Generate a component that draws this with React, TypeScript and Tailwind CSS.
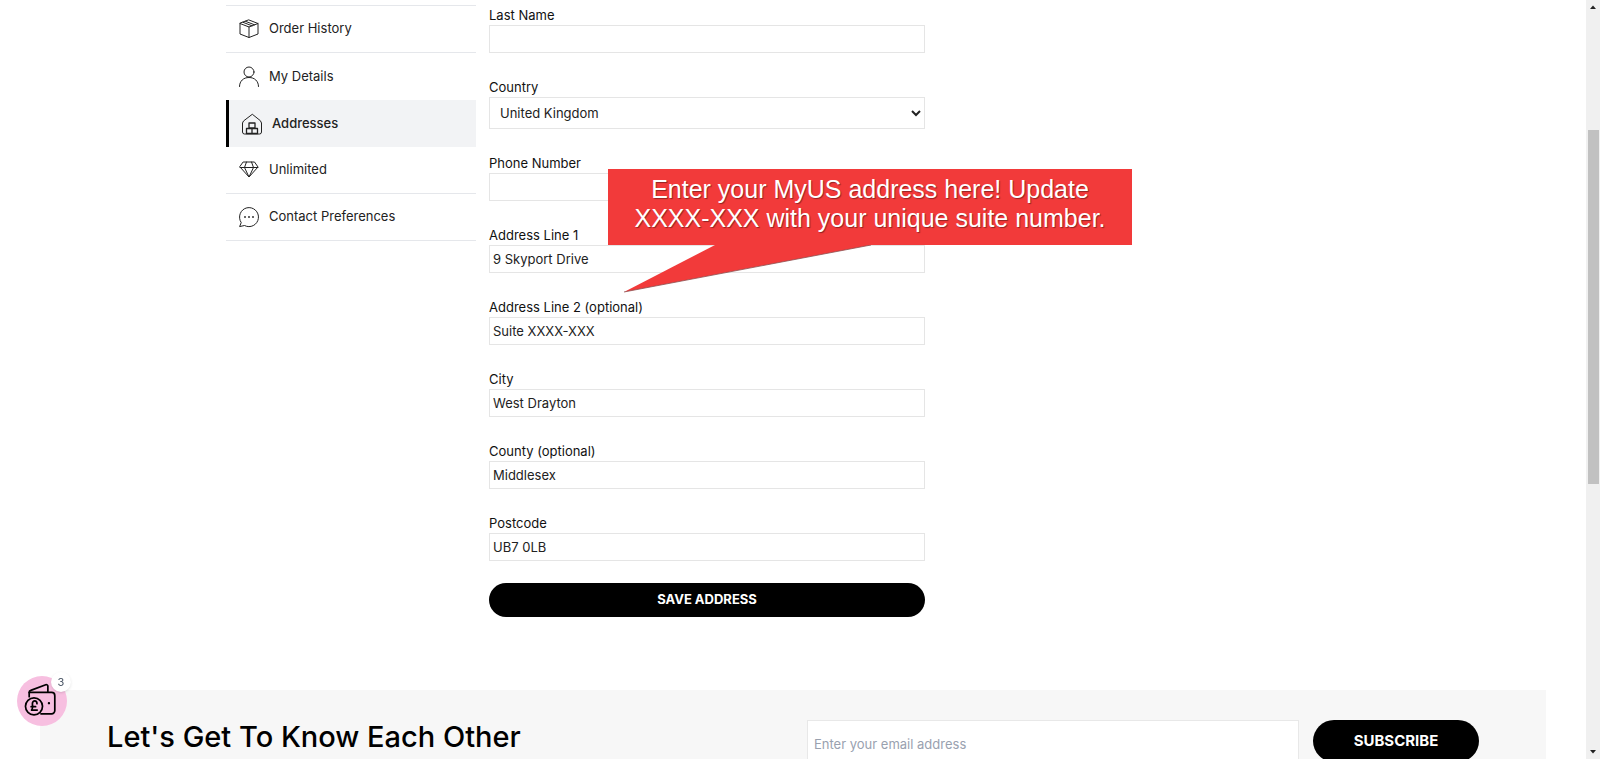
import { FC, ReactNode, useState } from "react";

interface NavItem {
  label: string;
  icon: ReactNode;
  active?: boolean;
  divider?: boolean;
}

interface FieldProps {
  id: string;
  label: string;
  defaultValue?: string;
}

const iconProps = {
  viewBox: "0 0 24 24",
  fill: "none",
  stroke: "currentColor",
  strokeLinejoin: "round" as const,
  strokeLinecap: "round" as const,
  className: "size-6 shrink-0",
  "aria-hidden": true,
};

const BoxIcon = () => (
  <svg {...iconProps}>
    <path d="M12 3 21 6.500v10.500L12 20.500l-9-3.500V6.500z" />
    <path d="M3 6.500 12 10l9-3.500M12 10v10.500M6 5.300l9 3.500M8.500 4.300l9 3.500" />
  </svg>
);

const PersonIcon = () => (
  <svg {...iconProps}>
    <circle cx="12" cy="7" r="5" />
    <path d="M2.500 21.500c0-5.500 4-9 9.500-9s9.500 3.500 9.500 9" />
  </svg>
);

const HouseIcon = () => (
  <svg {...iconProps}>
    <path d="M12 2.500 3.500 9 2.500 11v9a2 2 0 0 0 2 2h15a2 2 0 0 0 2-2v-9l-1-2z" />
    <path
      d="M9 11h6v5H9zM6.500 16.500h11V21.500h-11zM12 16.500v5"
      strokeWidth="1.3"
    />
  </svg>
);

const DiamondIcon = () => (
  <svg {...iconProps}>
    <path d="M6.500 4h11L21 9l-9 10L3 9z" />
    <path d="M3 9.500h18M9.500 4l-2 5.500L12 19l4.500-9.500-2-5.500" />
  </svg>
);

const ChatIcon = () => (
  <svg {...iconProps}>
    <path d="M4 17.300a9.500 9.500 0 1 1 3.500 3.200L3 21.500z" />
    <path d="M8 12h.01M12 12h.01M16 12h.01" strokeWidth="1.8" />
  </svg>
);

const navItems: NavItem[] = [
  { label: "Order History", icon: <BoxIcon />, divider: true },
  { label: "My Details", icon: <PersonIcon /> },
  { label: "Addresses", icon: <HouseIcon />, active: true },
  { label: "Unlimited", icon: <DiamondIcon />, divider: true },
  { label: "Contact Preferences", icon: <ChatIcon />, divider: true },
];

const Field: FC<FieldProps> = ({ id, label, defaultValue }) => (
  <div className="flex flex-col">
    <label htmlFor={id} className="leading-5">
      {label}
    </label>
    <input
      id={id}
      type="text"
      defaultValue={defaultValue}
      className="h-7 w-full border border-[#e5e5e5] bg-white px-[3px] text-[#222]"
    />
  </div>
);

const Sidebar = () => (
  <nav className="w-[250px] shrink-0 self-start border-t border-gray-200">
    {navItems.map((item) => (
      <a
        key={item.label}
        href="#"
        className={`flex h-[47px] items-center gap-2 pl-[11px] text-[#222] ${
          item.active ? "border-l-3 border-black bg-[#f2f3f5] font-medium" : ""
        } ${item.divider ? "border-b border-gray-200" : ""}`}
      >
        {item.icon}
        {item.label}
      </a>
    ))}
  </nav>
);

const Callout = () => (
  <div className="absolute top-[164px] left-[119px] w-[524px] font-['Liberation_Sans',Arial,sans-serif] text-white">
    <p className="h-[76px] bg-[#f23a3a] pt-1.5 text-center text-[25px] leading-[29px] [text-shadow:1px_1px_1px_rgba(0,0,0,0.4)]">
      Enter your MyUS address here! Update
      <br />
      XXXX-XXX with your unique suite number.
    </p>
    <svg viewBox="0 0 524 48" className="block w-full" aria-hidden="true">
      <path d="M107 0H263L16 47z" fill="#f23a3a" />
      <path d="M263 0 16 47" stroke="#8c5050" strokeWidth="0.8" />
    </svg>
  </div>
);

const AddressForm = () => (
  <form
    className="relative w-[436px] shrink-0"
    onSubmit={(e) => e.preventDefault()}
  >
    <div className="flex flex-col gap-6">
      <Field id="last-name" label="Last Name" />
      <div className="flex flex-col">
        <label htmlFor="country" className="leading-5">
          Country
        </label>
        <select
          id="country"
          className="h-8 w-full border border-[#e5e5e5] bg-white px-1.5 text-[#222]"
        >
          <option>United Kingdom</option>
        </select>
      </div>
      <Field id="phone" label="Phone Number" />
      <Field id="line1" label="Address Line 1" defaultValue="9 Skyport Drive" />
      <Field
        id="line2"
        label="Address Line 2 (optional)"
        defaultValue="Suite XXXX-XXX"
      />
      <Field id="city" label="City" defaultValue="West Drayton" />
      <Field id="county" label="County (optional)" defaultValue="Middlesex" />
      <Field id="postcode" label="Postcode" defaultValue="UB7 0LB" />
    </div>
    <button
      type="submit"
      className="mt-[22px] h-[34px] w-full rounded-full bg-black font-bold text-white"
    >
      SAVE ADDRESS
    </button>
    <Callout />
  </form>
);

const Newsletter = () => (
  <section className="mx-10 mt-[73px] grid grid-cols-2 gap-7 bg-[#f7f7f7] px-[67px] py-[30px]">
    <h2 className="text-[29px] leading-[34px] font-medium text-black">
      Let's Get To Know Each Other
    </h2>
    <form
      className="flex items-start gap-3.5"
      onSubmit={(e) => e.preventDefault()}
    >
      <input
        type="email"
        aria-label="Email address"
        placeholder="Enter your email address"
        className="h-12 min-w-0 flex-1 border border-[#e8e8e8] bg-white px-1.5 placeholder:text-gray-400"
      />
      <button
        type="submit"
        className="h-[42px] w-[166px] rounded-full bg-black text-[15px] font-bold text-white"
      >
        SUBSCRIBE
      </button>
    </form>
  </section>
);

const RewardsButton = () => {
  const [count] = useState(3);
  return (
    <button
      type="button"
      aria-label="Rewards"
      className="fixed bottom-[33px] left-[17px] flex size-[50px] items-center justify-center rounded-full bg-[#f7bfe0]"
    >
      <svg
        viewBox="2 2.500 30 30"
        fill="none"
        stroke="black"
        strokeWidth="1.600"
        strokeLinecap="round"
        strokeLinejoin="round"
        className="size-8 overflow-visible"
        aria-hidden="true"
      >
        <path d="M5 13.500V9.500a2 2 0 0 1 1.500-2L20.500 2.200a1.500 1.500 0 0 1 2 1.300v5" />
        <path d="M5 9.500h21a3 3 0 0 1 3 3v14a3 3 0 0 1-3 3H16" />
        <circle cx="9.500" cy="22.500" r="8" />
        <path d="M12.300 20c0-3.500-4.300-3.500-4.300 0 0 2 1 4-.8 6h5.300M6.800 22.800h4.200" />
        <circle cx="23.500" cy="19.500" r="0.6" fill="black" strokeWidth="1" />
      </svg>
      <span className="absolute -top-1 -right-1 flex size-5 items-center justify-center rounded-full bg-white text-[11px] text-gray-600 shadow-sm">
        {count}
      </span>
    </button>
  );
};

const ScrollTrack = () => (
  <div className="flex w-3.5 shrink-0 flex-col items-center bg-[#f0f0f0]">
    <svg viewBox="0 0 14 14" className="size-3.5" aria-hidden="true">
      <path d="M4 9h6L7 5.500z" fill="#222" />
    </svg>
    <div className="mt-[116px] h-[354px] w-[11px] bg-[#c1c1c1]" />
    <svg viewBox="0 0 14 14" className="mt-auto size-3.5" aria-hidden="true">
      <path d="M4 5h6L7 8.500z" fill="#222" />
    </svg>
  </div>
);

export default function App() {
  return (
    <div className="flex h-screen overflow-hidden bg-white font-['Inter',sans-serif] text-[13px] text-[#111]">
      <div className="min-w-0 flex-1">
        <main className="mx-auto flex max-w-[1134px] gap-[13px] pt-[5px]">
          <Sidebar />
          <AddressForm />
        </main>
        <Newsletter />
      </div>
      <ScrollTrack />
      <RewardsButton />
    </div>
  );
}
